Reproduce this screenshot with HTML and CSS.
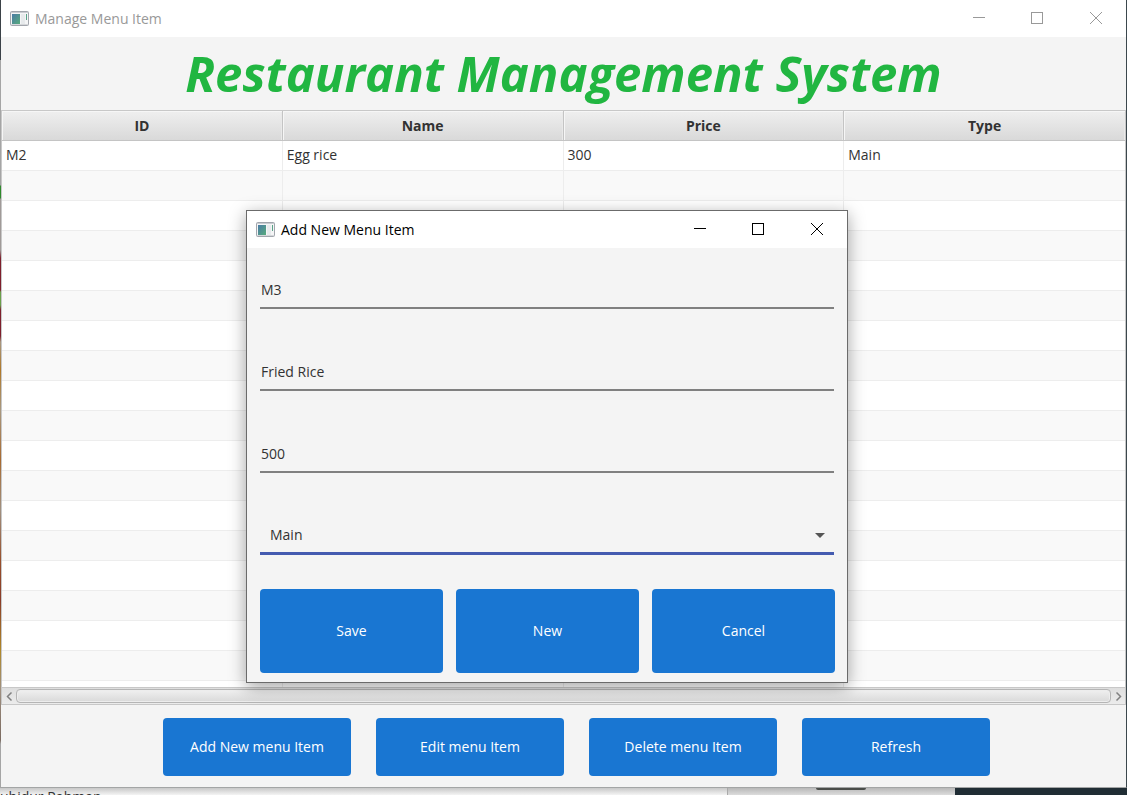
FILE: index.html
```html
<!DOCTYPE html>
<html lang="en">
<head>
<meta charset="utf-8">
<title>Manage Menu Item</title>
<link rel="stylesheet" href="styles.css">
</head>
<body>
<svg class="defs" aria-hidden="true">
  <defs>
    <linearGradient id="pane" x1="0" y1="0" x2="1" y2="1"><stop offset="0" stop-color="#4a7ba6"/><stop offset="1" stop-color="#57ab7c"/></linearGradient>
    <symbol id="app" viewBox="0 0 19 16">
      <rect x=".5" y=".5" width="18" height="14" rx="1" fill="#f4f5f6" stroke="#a2a6ad"/>
      <rect x="1" y="1" width="17" height="1" fill="#c9ccd1"/>
      <rect x="2" y="3" width="8" height="10" fill="url(#pane)"/>
      <rect x="11" y="3" width="4" height="10" fill="#e7eaec"/>
      <rect x="16" y="3" width="1" height="6" fill="#58a287"/>
      <rect x="1" y="13" width="17" height="1" fill="#d5d7da"/>
    </symbol>
    <symbol id="min" viewBox="0 0 13 13"><path d="M1 5.500H13" stroke="currentColor"/></symbol>
    <symbol id="max" viewBox="0 0 13 13"><rect x=".5" y=".5" width="11" height="11" fill="none" stroke="currentColor"/></symbol>
    <symbol id="close" viewBox="0 0 13 13"><path d="M0 0L12 12M12 0L0 12" stroke="currentColor" fill="none"/></symbol>
  </defs>
</svg>
<div class="desktop">
  <main class="window">
    <header class="titlebar inactive">
      <svg class="app-icon"><use href="#app"/></svg>
      <span class="caption">Manage Menu Item</span>
      <button class="control" aria-label="Minimize"><svg><use href="#min"/></svg></button>
      <button class="control" aria-label="Maximize"><svg><use href="#max"/></svg></button>
      <button class="control" aria-label="Close"><svg><use href="#close"/></svg></button>
    </header>
    <h1 class="heading">Restaurant Management System</h1>
    <div class="table-view">
      <table class="menu-table">
        <thead><tr><th>ID</th><th>Name</th><th>Price</th><th>Type</th></tr></thead>
        <tbody>
          <tr><td>M2</td><td>Egg rice</td><td>300</td><td>Main</td></tr>
          <tr><td></td><td></td><td></td><td></td></tr>
          <tr><td></td><td></td><td></td><td></td></tr>
          <tr><td></td><td></td><td></td><td></td></tr>
          <tr><td></td><td></td><td></td><td></td></tr>
          <tr><td></td><td></td><td></td><td></td></tr>
          <tr><td></td><td></td><td></td><td></td></tr>
          <tr><td></td><td></td><td></td><td></td></tr>
          <tr><td></td><td></td><td></td><td></td></tr>
          <tr><td></td><td></td><td></td><td></td></tr>
          <tr><td></td><td></td><td></td><td></td></tr>
          <tr><td></td><td></td><td></td><td></td></tr>
          <tr><td></td><td></td><td></td><td></td></tr>
          <tr><td></td><td></td><td></td><td></td></tr>
          <tr><td></td><td></td><td></td><td></td></tr>
          <tr><td></td><td></td><td></td><td></td></tr>
          <tr><td></td><td></td><td></td><td></td></tr>
          <tr><td></td><td></td><td></td><td></td></tr>
          <tr><td></td><td></td><td></td><td></td></tr>
        </tbody>
      </table>
    </div>
    <div class="scrollbar">
      <button class="scroll-arrow" aria-label="Scroll left"><svg viewBox="0 0 7 11"><path d="M5.500 1.500L1.500 5.500L5.500 9.500"/></svg></button>
      <div class="thumb"></div>
      <button class="scroll-arrow" aria-label="Scroll right"><svg viewBox="0 0 7 11"><path d="M1.500 1.500L5.500 5.500L1.500 9.500"/></svg></button>
    </div>
    <footer class="actions">
      <button class="btn">Add New menu Item</button>
      <button class="btn">Edit menu Item</button>
      <button class="btn">Delete menu Item</button>
      <button class="btn">Refresh</button>
    </footer>
  </main>
  <div class="behind">
    <div class="behind-text">uhidur Rahman</div>
    <div class="behind-panel"><div class="behind-tab"></div></div>
    <div class="behind-dark"></div>
  </div>

  <section class="dialog" role="dialog" aria-label="Add New Menu Item">
    <header class="titlebar">
      <svg class="app-icon"><use href="#app"/></svg>
      <span class="caption">Add New Menu Item</span>
      <button class="control" aria-label="Minimize"><svg><use href="#min"/></svg></button>
      <button class="control" aria-label="Maximize"><svg><use href="#max"/></svg></button>
      <button class="control" aria-label="Close"><svg><use href="#close"/></svg></button>
    </header>
    <form class="form">
      <input class="field" type="text" aria-label="ID" value="M3">
      <input class="field" type="text" aria-label="Name" value="Fried Rice">
      <input class="field" type="text" aria-label="Price" value="500">
      <div class="combo">
        <select class="field select" aria-label="Type"><option>Main</option></select>
        <svg class="caret" viewBox="0 0 10 5"><path d="M0 0H10L5 5Z" fill="#555"/></svg>
      </div>
      <div class="form-actions">
        <button class="btn" type="button">Save</button>
        <button class="btn" type="button">New</button>
        <button class="btn" type="button">Cancel</button>
      </div>
    </form>
  </section>
</div>
</body>
</html>
```
FILE: styles.css
```css
* { box-sizing: border-box; }

body {
  margin: 0;
  font-family: "Open Sans", "Noto Sans", sans-serif;
  font-size: 14px;
  line-height: 20px;
  color: #323232;
}

button, input, select { font: inherit; color: inherit; border: 0; margin: 0; }

.defs { position: absolute; width: 0; height: 0; }

.desktop {
  position: relative;
  display: flex;
  flex-direction: column;
  height: 100vh;
  padding-left: 1px;
  overflow: hidden;
  background: linear-gradient(#3b4248 60px, #a5a5a5 60px, #a5a5a5 185px, #2f8a2c 186px, #2f8a2c 198px, #a09a98 199px, #a09a98 250px, #7e1f2c 258px, #7e1f2c 290px, #6aa04a 292px, #6aa04a 305px, #7e1f2c 310px, #7e1f2c 336px, #a89880 342px, #b07828 370px, #a89880 410px, #a86a30 460px, #a09080 510px, #98502c 560px, #8a3c28 600px, #b08828 650px, #a09080 690px, #7a6a60 740px, #a5a5a5 744px);
}

.window {
  flex: 1;
  min-height: 0;
  display: flex;
  flex-direction: column;
  background: #f4f4f4;
  border-right: 1px solid #3b474d;
  border-bottom: 1px solid #a3a5a5;
}

.titlebar {
  display: flex;
  align-items: center;
  flex: none;
  height: 37px;
  padding-left: 9px;
  background: #fff;
  color: #000;
}

.titlebar.inactive { color: #999; }

.app-icon { width: 19px; height: 16px; margin-right: 6px; }

.caption { flex: 1; }

.control {
  display: flex;
  align-items: center;
  justify-content: center;
  width: 59px;
  height: 37px;
  padding: 0;
  background: none;
}

.control svg { width: 13px; height: 13px; }

.heading {
  flex: none;
  margin: 0;
  height: 73px;
  font-size: 49px;
  line-height: 73px;
  font-weight: 700;
  font-style: italic;
  text-align: center;
  white-space: nowrap;
  color: #21b641;
}

.table-view {
  flex: 1;
  min-height: 0;
  overflow: hidden;
  background: #fff;
  border: solid #c8c8c8;
  border-width: 1px 1px 0;
}

.menu-table {
  width: 100%;
  table-layout: fixed;
  border-collapse: separate;
  border-spacing: 0;
}

.menu-table th {
  width: calc(25% - 1px);
  height: 30px;
  padding: 0;
  font-weight: 700;
  border-right: 1px solid #c4c4c4;
  border-bottom: 1px solid #c4c4c4;
  background: linear-gradient(#efefef, #d9d9d9);
  box-shadow: inset 1px 1px #f6f6f6, inset -1px 0 #e9e9e9;
}

.menu-table th:nth-child(odd) { width: calc(25% + 1px); }

.menu-table td {
  height: 30px;
  padding: 0 4px 2px;
  border-right: 1px solid #ededed;
  border-bottom: 1px solid #ededed;
}

.menu-table tr > :last-child { border-right: 0; }

.menu-table tbody tr:nth-child(even) { background: #f9f9f9; }

.scrollbar {
  flex: none;
  display: flex;
  align-items: center;
  height: 18px;
  border: 1px solid #c8c8c8;
  background: linear-gradient(#dedede, #ececec);
}

.scroll-arrow {
  display: flex;
  align-items: center;
  justify-content: center;
  width: 14px;
  padding: 0;
  background: none;
}

.scroll-arrow svg { width: 7px; height: 11px; fill: none; stroke: #808080; stroke-width: 1.500px; }

.thumb {
  flex: 1;
  height: 14px;
  border: 1px solid #b5b5b5;
  border-radius: 4px;
  background: linear-gradient(#f0f0f0, #d9d9d9);
  box-shadow: inset 0 0 0 1px #ededed;
}

.actions {
  flex: none;
  display: flex;
  justify-content: center;
  gap: 25px;
  padding: 13px 0 11px 26px;
}

.btn {
  padding: 0;
  background: #1976d2;
  color: #fff;
  border-radius: 4px;
}

.actions .btn { width: 188px; height: 58px; }

.behind {
  flex: none;
  display: flex;
  height: 7px;
  margin-left: -1px;
  overflow: hidden;
  background: linear-gradient(#c8c8c8, #f4f4f4);
}

.behind-text { width: 727px; line-height: 18px; }

.behind-panel {
  width: 228px;
  border-left: 1px solid #aaa;
  background: linear-gradient(#b8b8b8, #dcdcdc);
}

.behind-tab { width: 50px; height: 2px; margin-left: 88px; background: #4a4d4a; border-radius: 0 0 4px 4px; }

.behind-dark { flex: 1; background: #202d34; }

.dialog {
  position: absolute;
  left: 246px;
  top: 210px;
  width: 602px;
  border: 1px solid #6b6b6b;
  background: #f4f4f4;
  box-shadow: 0 4px 16px rgba(0, 0, 0, .36);
}

.form { padding: 21px 12px 9px 13px; }

.field {
  display: block;
  width: calc(100% - 1px);
  height: 40px;
  margin-bottom: 42px;
  padding: 3px 1px 0;
  background: none;
  border-bottom: 2px solid #808080;
  border-radius: 0;
  outline: 0;
}

.combo { position: relative; margin-bottom: 34px; }

.select {
  appearance: none;
  margin-bottom: 0;
  padding: 3px 10px 0;
  border-bottom: 3px solid #445bb0;
}

.caret { position: absolute; right: 10px; top: 18px; width: 10px; height: 5px; }

.form-actions { display: grid; grid-template-columns: repeat(3, 1fr); gap: 13px; }

.form-actions .btn { height: 84px; }
```
